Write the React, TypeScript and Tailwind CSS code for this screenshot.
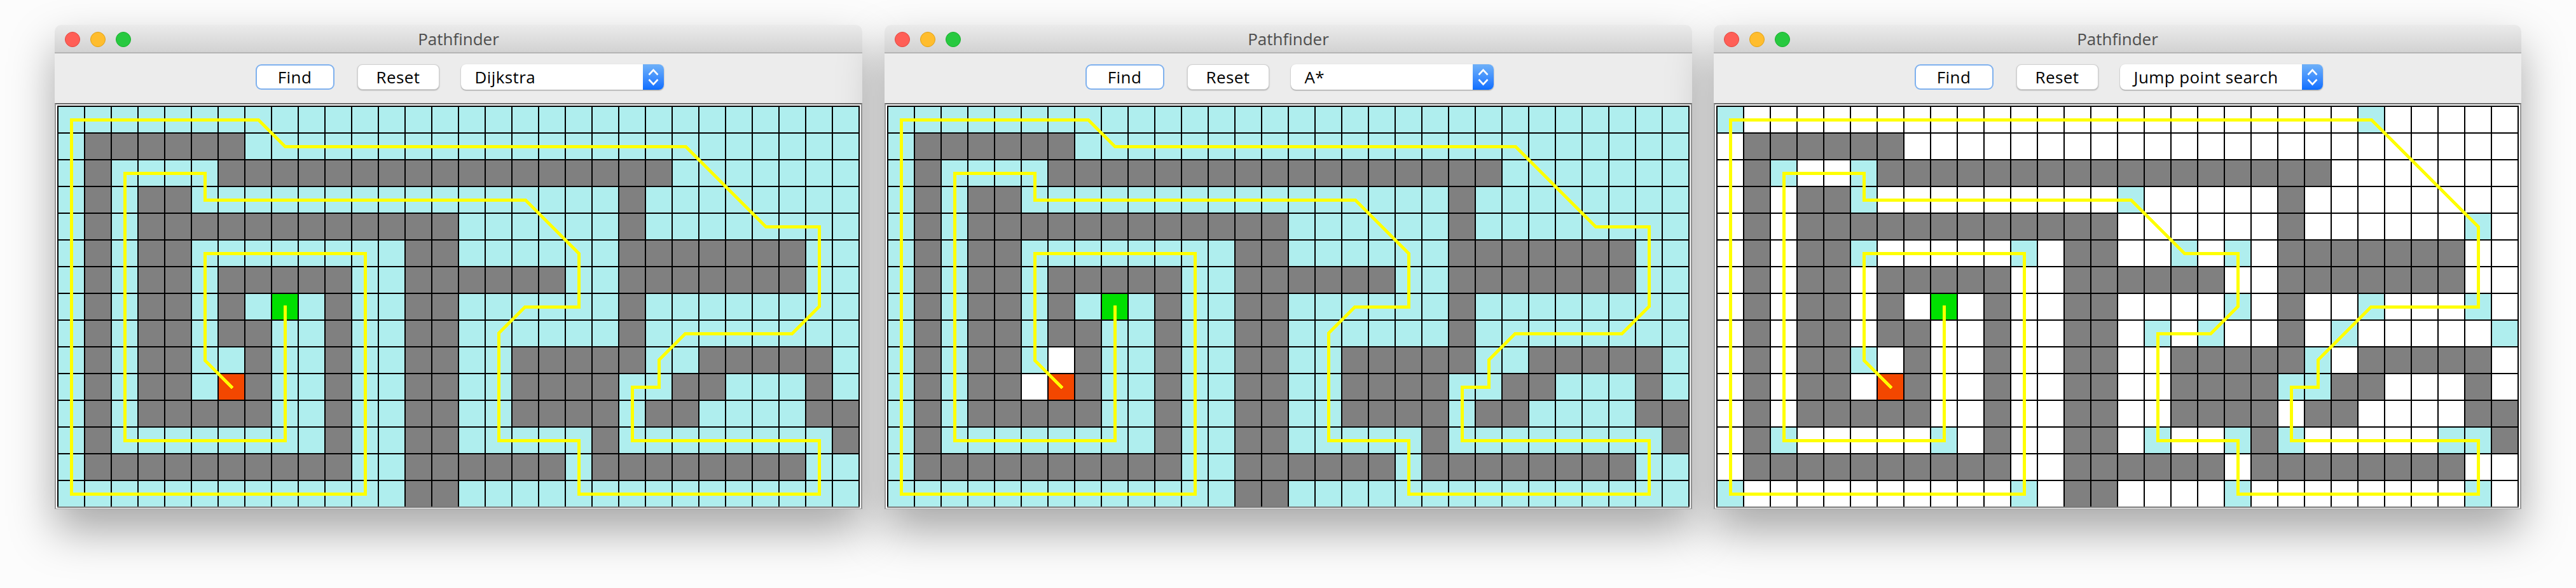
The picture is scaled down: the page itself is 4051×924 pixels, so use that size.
const maze = [
  "..............................",
  ".######.......................",
  ".#....#################.......",
  ".#.##................#........",
  ".#.############......#........",
  ".#.##........##......#######..",
  ".#.##.#####..######..#######..",
  ".#.##.#...#..##......#........",
  ".#.##.##..#..##......#........",
  ".#.##..#..#..##..#####..#####.",
  ".#.##..#..#..##..####..##...#.",
  ".#.#####..#..##..####.##....##",
  ".#........#..##.....#........#",
  ".##########..######.########..",
  ".............##...............",
];

// [col, row] corners of the found path, start to goal
const mainPath = [
  [8, 7], [8, 12], [2, 12], [2, 2], [5, 2], [5, 3], [17, 3], [19, 5], [19, 7], [17, 7], [16, 8], [16, 12],
  [19, 12], [19, 14], [28, 14], [28, 12], [21, 12], [21, 10], [22, 10], [22, 9], [23, 8], [27, 8], [28, 7],
  [28, 4], [26, 4], [23, 1], [8, 1], [7, 0], [0, 0], [0, 14], [11, 14], [11, 5], [5, 5], [5, 9], [6, 10],
];

const jumpPath = [
  [8, 7], [8, 12], [2, 12], [2, 2], [5, 2], [5, 3], [15, 3], [17, 5], [19, 5], [19, 7], [18, 8], [16, 8], [16, 12],
  [19, 12], [19, 14], [28, 14], [28, 12], [21, 12], [21, 10], [22, 10], [22, 9], [24, 7], [28, 7],
  [28, 4], [24, 0], [0, 0], [0, 14], [11, 14], [11, 5], [5, 5], [5, 9], [6, 10],
];

const jumpCells = [
  "0,0", "24,0", "2,2", "5,2", "5,3", "15,3", "28,4", "5,5", "11,5", "17,5", "19,5",
  "19,7", "24,7", "28,7", "5,9", "16,8", "18,8", "23,8", "29,8", "22,9", "21,10", "22,10",
  "2,12", "8,12", "16,12", "19,12", "21,12", "27,12", "28,12", "0,14", "11,14", "19,14", "28,14",
];

const aStarUnvisited = ["6,9", "5,10"];

function cellClass(col: number, row: number, visited: (key: string) => boolean) {
  if (col === 8 && row === 7) return "bg-[#00e000]";
  if (col === 6 && row === 10) return "bg-[#f34700]";
  if (maze[row][col] === "#") return "bg-[#808080]";
  return visited(`${col},${row}`) ? "bg-[#afeeee]" : "bg-white";
}

function Grid({ path, visited }: { path: number[][]; visited: (key: string) => boolean }) {
  const points = path.map(([c, r]) => `${22 + 42 * c},${22 + 42 * r}`).join(" ");
  return (
    <div className="relative border-b-2 border-[#777777]">
      <div className="grid grid-cols-[repeat(30,40px)] auto-rows-[40px] gap-[2px] bg-black p-[2px] pb-0">
        {maze.map((line, r) =>
          line.split("").map((_, c) => <div key={`${c}-${r}`} className={cellClass(c, r, visited)} />)
        )}
      </div>
      <svg className="absolute left-0 top-0" width="1262" height="632" viewBox="0 0 1262 632" fill="none">
        <polyline
          points={points}
          stroke="#ffff00"
          strokeWidth="5"
          strokeLinecap="square"
          strokeLinejoin="miter"
          shapeRendering="crispEdges"
        />
      </svg>
    </div>
  );
}

function Window({
  algorithm,
  path,
  visited,
  className,
}: {
  algorithm: string;
  path: number[][];
  visited: (key: string) => boolean;
  className?: string;
}) {
  return (
    <div className={`w-[1270px] shrink-0 rounded-t-[10px] shadow-[0_34px_70px_rgba(0,0,0,0.34)] ${className ?? ""}`}>
      {/* Title bar */}
      <div className="relative flex h-[45px] items-center justify-center rounded-t-[10px] border-b-2 border-[#b4b4b4] bg-gradient-to-b from-[#ebebeb] to-[#d2d2d2]">
        <div className="absolute left-[16px] top-[11px] flex gap-[16px]">
          <span className="h-[24px] w-[24px] rounded-full border border-[#e2463f] bg-[#ff5f57]" />
          <span className="h-[24px] w-[24px] rounded-full border border-[#e1a116] bg-[#ffbd2e]" />
          <span className="h-[24px] w-[24px] rounded-full border border-[#17b02c] bg-[#28c940]" />
        </div>
        <span className="text-[26px] leading-none text-[#4d4d4d]">Pathfinder</span>
      </div>

      {/* Toolbar */}
      <div className="flex h-[78px] justify-center bg-[#ececec] pl-[3px] pt-[17px] tracking-[0.4px]">
        <button className="mr-[36px] h-[40px] w-[124px] rounded-[9px] border-2 border-[#7fb1ee] bg-white text-[26px] leading-none text-black">
          Find
        </button>
        <button className="mr-[34px] h-[40px] w-[129px] rounded-[8px] border border-[#d0d0d0] bg-white text-[26px] leading-none text-black shadow-[0_1px_2px_rgba(0,0,0,0.3)]">
          Reset
        </button>
        <div className="flex h-[40px] w-[319px] rounded-[8px] bg-white shadow-[0_1px_2px_rgba(0,0,0,0.4)]">
          <span className="flex-1 pl-[22px] text-[26px] leading-[40px] text-black">{algorithm}</span>
          <span className="h-[40px] w-[33px] rounded-r-[8px] bg-gradient-to-b from-[#6fb1f8] to-[#0a6dff]">
            <svg width="33" height="40" viewBox="0 0 33 40" fill="none" stroke="#ffffff" strokeWidth="2.6">
              <polyline points="9.5,16.5 16.5,9 23.5,16.5" />
              <polyline points="9.5,24 16.5,31.5 23.5,24" />
            </svg>
          </span>
        </div>
      </div>

      {/* Maze panel */}
      <div className="border-x-2 border-b border-t-2 border-x-[#999999] border-b-[#a8a8a8] border-t-[#666666] bg-white px-[2px] pb-px pt-[2px]">
        <Grid path={path} visited={visited} />
      </div>
    </div>
  );
}

export default function App() {
  return (
    <div className="flex h-[924px] w-[4051px] items-start gap-[34px] overflow-hidden bg-[#fcfcfc] pl-[86px] pt-[39px] font-['Open_Sans','Liberation_Sans',sans-serif]">
      <Window algorithm="Dijkstra" path={mainPath} visited={() => true} />
      <Window algorithm="A*" path={mainPath} visited={(k) => !aStarUnvisited.includes(k)} className="ml-px" />
      <Window algorithm="Jump point search" path={jumpPath} visited={(k) => jumpCells.includes(k)} />
    </div>
  );
}
